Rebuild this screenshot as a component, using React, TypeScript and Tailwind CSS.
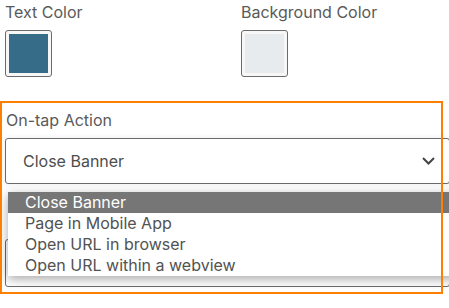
const options = ['Close Banner', 'Page in Mobile App', 'Open URL in browser', 'Open URL within a webview']

function Swatch({ color }: { color: string }) {
  return (
    <div className="w-[47px] h-[47px] rounded-[3px] border border-[#6b6b6b] bg-[#f7f7f7] p-[3px]">
      <div className="w-full h-full" style={{ backgroundColor: color }} />
    </div>
  )
}

function ColorField({ label, color }: { label: string; color: string }) {
  return (
    <div className="flex flex-col gap-[8px]">
      <span className="text-[16px] leading-[20px] text-[#5a5a5a]">{label}</span>
      <Swatch color={color} />
    </div>
  )
}

export default function App() {
  return (
    <div
      className="relative w-[449px] h-[308px] overflow-hidden bg-white"
      style={{ fontFamily: 'Inter, "Noto Sans", sans-serif' }}
    >
      {/* colour pickers */}
      <div className="flex pt-[2px] pl-[5px]">
        <div className="w-[236px]">
          <ColorField label="Text Color" color="#376c89" />
        </div>
        <ColorField label="Background Color" color="#e7ebee" />
      </div>

      {/* on-tap action */}
      <div className="relative mt-[24px] w-[443px] h-[193px] pt-[9px] pl-[5px]">
        <div className="text-[16px] leading-[20px] text-[#5a5a5a] pl-[1px]">On-tap Action</div>

        <div className="relative mt-[8px] w-[445px]">
          <div className="h-[46px] rounded-[3px] border border-[#6b6b6b] bg-white flex items-center justify-between pl-[17px] pr-[14px] shadow-[0_0_6px_rgba(0,0,0,0.08)]">
            <span className="text-[16px] text-[#4d4d4d]">Close Banner</span>
            <svg width="13" height="8" viewBox="0 0 13 8" fill="none">
              <polyline points="1,1 6.5,6.5 12,1" stroke="#444" strokeWidth="2" />
            </svg>
          </div>

          {/* field hidden under the open list */}
          <div className="mt-[55px] h-[48px] rounded-[3px] border border-[#6b6b6b] bg-white" />

          {/* open list */}
          <div className="absolute left-[3px] top-[54px] w-[450px] bg-white shadow-[0_3px_10px_rgba(0,0,0,0.35)]">
            {options.map((o, i) => (
              <div
                key={o}
                className={
                  'h-[21px] leading-[21px] pl-[17px] text-[16px] ' +
                  (i === 0 ? 'bg-[#767676] text-white' : 'text-[#525252]')
                }
              >
                {o}
              </div>
            ))}
          </div>
        </div>

        <div className="pointer-events-none absolute inset-0 border-2 border-[#ff8000]" />
      </div>
    </div>
  )
}
